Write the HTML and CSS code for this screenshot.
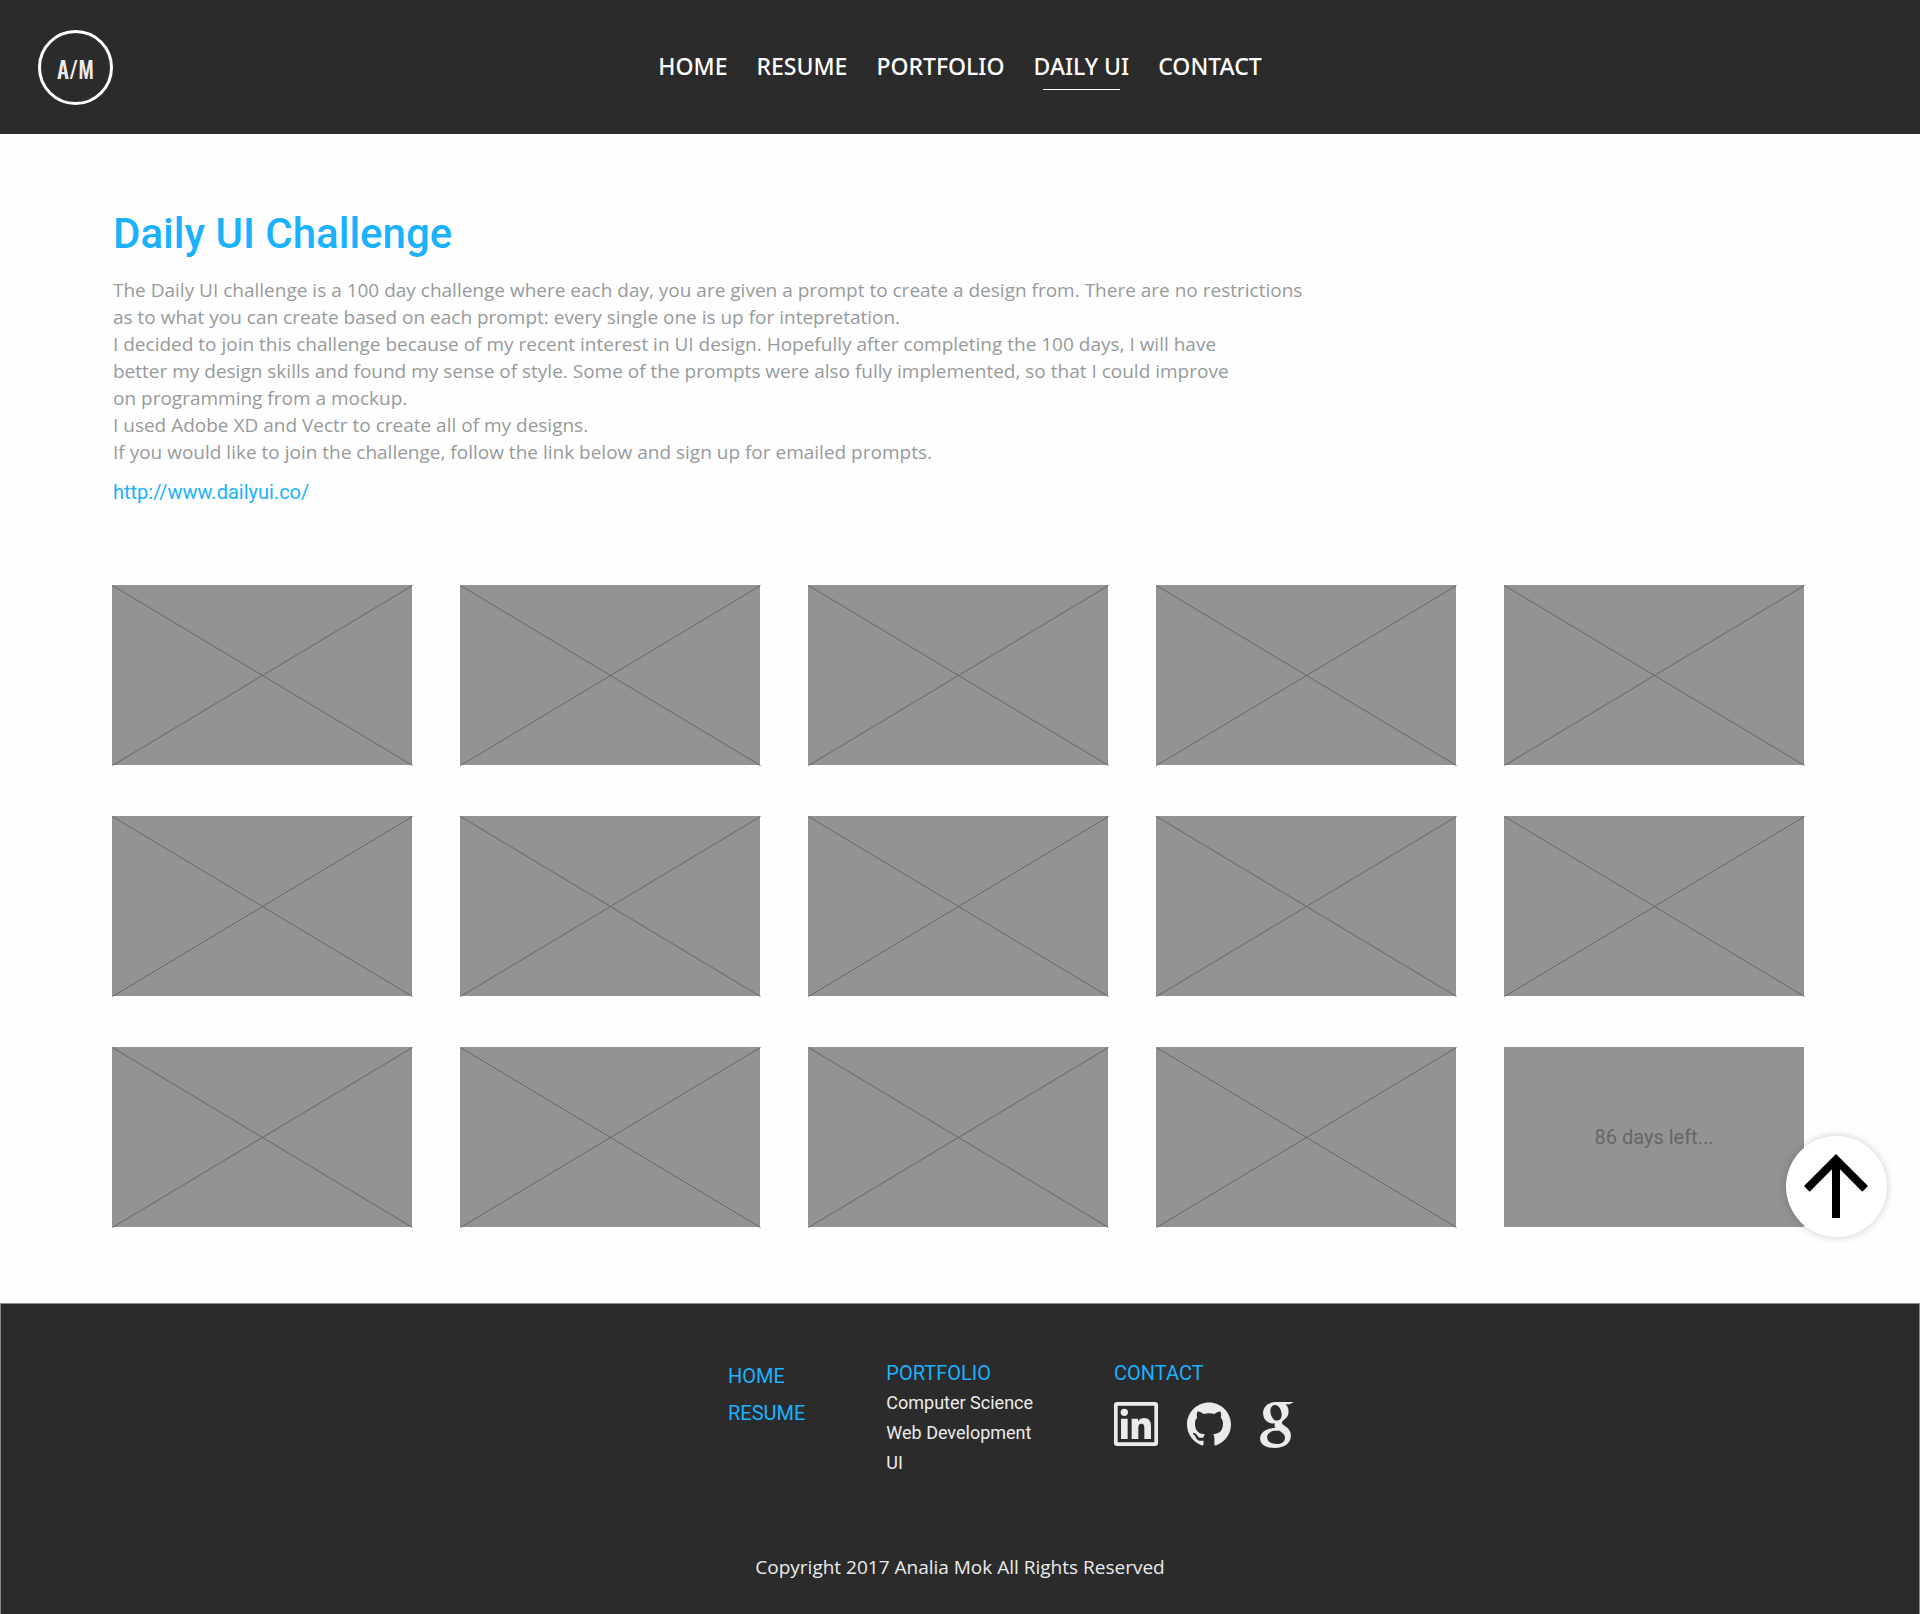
FILE: index.html
```html
<!DOCTYPE html>
<html lang="en">
<head>
<meta charset="utf-8">
<meta name="viewport" content="width=device-width, initial-scale=1">
<title>Daily UI Challenge</title>
<link rel="stylesheet" href="styles.css">
</head>
<body>
<header class="site-header" id="top">
  <a class="logo" href="#top">A/M</a>
  <nav class="main-nav">
    <a href="#home">HOME</a>
    <a href="#resume">RESUME</a>
    <a href="#portfolio">PORTFOLIO</a>
    <a class="current" href="#daily-ui">DAILY UI</a>
    <a href="#contact">CONTACT</a>
  </nav>
</header>

<main class="content">
  <section class="intro">
    <h1>Daily UI Challenge</h1>
    <p>The Daily UI challenge is a 100 day challenge where each day, you are given a prompt to create a design from. There are no restrictions<br>
    as to what you can create based on each prompt: every single one is up for intepretation.</p>
    <p>I decided to join this challenge because of my recent interest in UI design. Hopefully after completing the 100 days, I will have<br>
    better my design skills and found my sense of style. Some of the prompts were also fully implemented, so that I could improve<br>
    on programming from a mockup.</p>
    <p>I used Adobe XD and Vectr to create all of my designs.</p>
    <p>If you would like to join the challenge, follow the link below and sign up for emailed prompts.</p>
    <a class="challenge-link" href="http://www.dailyui.co/">http://www.dailyui.co/</a>
  </section>

  <section class="gallery">
    <svg class="tile" viewBox="0 0 300 180" preserveAspectRatio="none"><path d="M.5 .5L300.5 180.5M300.5 .5L.5 180.5"/></svg>
    <svg class="tile" viewBox="0 0 300 180" preserveAspectRatio="none"><path d="M.5 .5L300.5 180.5M300.5 .5L.5 180.5"/></svg>
    <svg class="tile" viewBox="0 0 300 180" preserveAspectRatio="none"><path d="M.5 .5L300.5 180.5M300.5 .5L.5 180.5"/></svg>
    <svg class="tile" viewBox="0 0 300 180" preserveAspectRatio="none"><path d="M.5 .5L300.5 180.5M300.5 .5L.5 180.5"/></svg>
    <svg class="tile" viewBox="0 0 300 180" preserveAspectRatio="none"><path d="M.5 .5L300.5 180.5M300.5 .5L.5 180.5"/></svg>
    <svg class="tile" viewBox="0 0 300 180" preserveAspectRatio="none"><path d="M.5 .5L300.5 180.5M300.5 .5L.5 180.5"/></svg>
    <svg class="tile" viewBox="0 0 300 180" preserveAspectRatio="none"><path d="M.5 .5L300.5 180.5M300.5 .5L.5 180.5"/></svg>
    <svg class="tile" viewBox="0 0 300 180" preserveAspectRatio="none"><path d="M.5 .5L300.5 180.5M300.5 .5L.5 180.5"/></svg>
    <svg class="tile" viewBox="0 0 300 180" preserveAspectRatio="none"><path d="M.5 .5L300.5 180.5M300.5 .5L.5 180.5"/></svg>
    <svg class="tile" viewBox="0 0 300 180" preserveAspectRatio="none"><path d="M.5 .5L300.5 180.5M300.5 .5L.5 180.5"/></svg>
    <svg class="tile" viewBox="0 0 300 180" preserveAspectRatio="none"><path d="M.5 .5L300.5 180.5M300.5 .5L.5 180.5"/></svg>
    <svg class="tile" viewBox="0 0 300 180" preserveAspectRatio="none"><path d="M.5 .5L300.5 180.5M300.5 .5L.5 180.5"/></svg>
    <svg class="tile" viewBox="0 0 300 180" preserveAspectRatio="none"><path d="M.5 .5L300.5 180.5M300.5 .5L.5 180.5"/></svg>
    <svg class="tile" viewBox="0 0 300 180" preserveAspectRatio="none"><path d="M.5 .5L300.5 180.5M300.5 .5L.5 180.5"/></svg>
    <div class="tile tile-remaining">86 days left...</div>
  </section>

  <button class="to-top" type="button" aria-label="Back to top">
    <svg viewBox="0 0 24 24"><path d="M4 12l1.41 1.41L11 7.83V20h2V7.83l5.58 5.59L20 12l-8-8-8 8z"/></svg>
  </button>
</main>

<footer class="site-footer">
  <div class="footer-columns">
    <nav class="footer-pages">
      <a href="#home">HOME</a>
      <a href="#resume">RESUME</a>
    </nav>
    <nav class="footer-portfolio">
      <a class="footer-title" href="#portfolio">PORTFOLIO</a>
      <a href="#cs">Computer Science</a>
      <a href="#web">Web Development</a>
      <a href="#ui">UI</a>
    </nav>
    <div class="footer-contact">
      <a class="footer-title" href="#contact">CONTACT</a>
      <div class="social">
        <a href="#linkedin" aria-label="LinkedIn">
          <svg width="44" height="44" viewBox="0 0 132 132"><path fill-rule="evenodd" d="M9 0H123Q132 0 132 9V123Q132 132 123 132H9Q0 132 0 123V9Q0 0 9 0ZM11 11V121H121V11Z"/><circle cx="31" cy="31" r="11"/><path d="M21 50H41V111H21ZM53 50H72V58Q79 48 91 48Q111 48 111 73V111H91V77Q91 65 82 65Q73 65 73 77V111H53Z"/></svg>
        </a>
        <a href="#github" aria-label="GitHub">
          <svg width="44" height="44" viewBox="0 0 24 24"><path d="M12 .297c-6.63 0-12 5.373-12 12 0 5.303 3.438 9.8 8.205 11.385.6.113.82-.258.82-.577 0-.285-.01-1.04-.015-2.04-3.338.724-4.042-1.61-4.042-1.61C4.422 18.07 3.633 17.7 3.633 17.7c-1.087-.744.084-.729.084-.729 1.205.084 1.838 1.236 1.838 1.236 1.07 1.835 2.809 1.305 3.495.998.108-.776.417-1.305.76-1.605-2.665-.3-5.466-1.332-5.466-5.93 0-1.31.465-2.38 1.235-3.22-.135-.303-.54-1.523.105-3.176 0 0 1.005-.322 3.3 1.23.96-.267 1.98-.399 3-.405 1.02.006 2.04.138 3 .405 2.28-1.552 3.285-1.23 3.285-1.23.645 1.653.24 2.873.12 3.176.765.84 1.23 1.91 1.23 3.22 0 4.61-2.805 5.625-5.475 5.92.42.36.81 1.096.81 2.22 0 1.606-.015 2.896-.015 3.286 0 .315.21.69.825.57C20.565 22.092 24 17.592 24 12.297c0-6.627-5.373-12-12-12"/></svg>
        </a>
        <a href="#google" aria-label="Google">
          <svg width="34" height="46" viewBox="0 0 102 139"><path fill-rule="evenodd" d="M48 0H102L89 7H77Q86 15 86 29C86 45 76 51 69 57C63 63 66 67 73 71C83 78 93 85 93 102C93 124 75 139 44 139C17 139 0 128 0 110C0 91 19 80 47 78C42 73 43 69 45 65C23 67 9 53 9 34C9 14 25 0 48 0ZM44 9C35 10 30 19 31 30C33 45 41 57 52 56C62 55 66 46 65 35C63 20 55 8 44 9ZM50 87C32 87 21 94 21 106C21 119 33 127 51 127C67 127 75 119 75 108C75 98 67 93 58 87Z"/></svg>
        </a>
      </div>
    </div>
  </div>
  <p class="copyright">Copyright 2017 Analia Mok All Rights Reserved</p>
</footer>
</body>
</html>
```
FILE: styles.css
```css
* {
  box-sizing: border-box;
}

body {
  margin: 0;
  background: #fefefe;
  font-family: Roboto, sans-serif;
}

a {
  color: inherit;
  text-decoration: none;
}

.site-header {
  display: grid;
  grid-template-columns: 1fr auto 1fr;
  align-items: center;
  height: 134px;
  padding: 0 38px;
  background: #2b2b2b;
}

.logo {
  display: flex;
  align-items: center;
  justify-content: center;
  width: 75px;
  height: 75px;
  padding-top: 3px;
  border: 3px solid #fff;
  border-radius: 50%;
  color: #ebebeb;
  font: 500 23px Oswald, "Roboto Condensed", "Open Sans Condensed", "DejaVu Sans Condensed", sans-serif;
}

.main-nav {
  display: flex;
  gap: 29px;
  padding-bottom: 2px;
  color: #fff;
  font: 500 23px/44px "Noto Sans", sans-serif;
}

.current {
  position: relative;
}

.current::after {
  content: "";
  position: absolute;
  right: 9px;
  bottom: -2px;
  left: 9px;
  height: 1px;
  background: #fff;
}

.content {
  position: relative;
  padding: 75px 116px 76px 112px;
}

.intro {
  padding-left: 1px;
  color: #979a9b;
  font: 19px/27px "Open Sans", sans-serif;
}

.intro h1 {
  margin: 0 0 18px;
  color: #1ab2ff;
  font: 500 42px/50px Roboto, sans-serif;
}

.intro p {
  margin: 0;
}

.challenge-link {
  display: block;
  margin-top: 13px;
  color: #1ab2ff;
  font: 20px/27px Roboto, sans-serif;
}

.gallery {
  display: grid;
  grid-template-columns: repeat(5, 1fr);
  gap: 51px 48px;
  margin-top: 79px;
}

.tile {
  display: block;
  width: 100%;
  aspect-ratio: 5 / 3;
  overflow: visible;
  background: #939393;
  fill: none;
  stroke: #666;
  stroke-width: 1px;
}

.tile-remaining {
  display: flex;
  align-items: center;
  justify-content: center;
  color: #666;
  font-size: 20px;
}

.to-top {
  position: absolute;
  right: 33px;
  bottom: 66px;
  display: flex;
  align-items: center;
  justify-content: center;
  width: 101px;
  height: 101px;
  padding: 0 1px 1px 0;
  border: 0;
  border-radius: 50%;
  background: #fff;
  box-shadow: 0 0 8px rgba(0, 0, 0, 0.2);
  cursor: pointer;
}

.to-top svg {
  flex: none;
  width: 96px;
  height: 96px;
}

.site-footer {
  padding: 54px 20px 33px;
  border: 1px solid #8a8a8a;
  border-bottom: 0;
  background: #2b2b2b;
  color: #ebebeb;
}

.footer-columns {
  display: flex;
  justify-content: center;
  gap: 81px;
  padding-left: 102px;
}

.footer-pages,
.footer-portfolio {
  display: flex;
  flex-direction: column;
}

.footer-pages,
.footer-title {
  color: #1ab2ff;
  font-size: 20px;
}

.footer-pages {
  line-height: 37px;
}

.footer-portfolio {
  font-size: 18px;
  line-height: 30px;
}

.footer-contact {
  line-height: 30px;
}

.social {
  display: flex;
  gap: 29px;
  margin-top: 12px;
}

.social svg {
  display: block;
  fill: currentColor;
}

.copyright {
  margin: 76px 0 0;
  font: 19px/27px "Open Sans", sans-serif;
  text-align: center;
}
```
